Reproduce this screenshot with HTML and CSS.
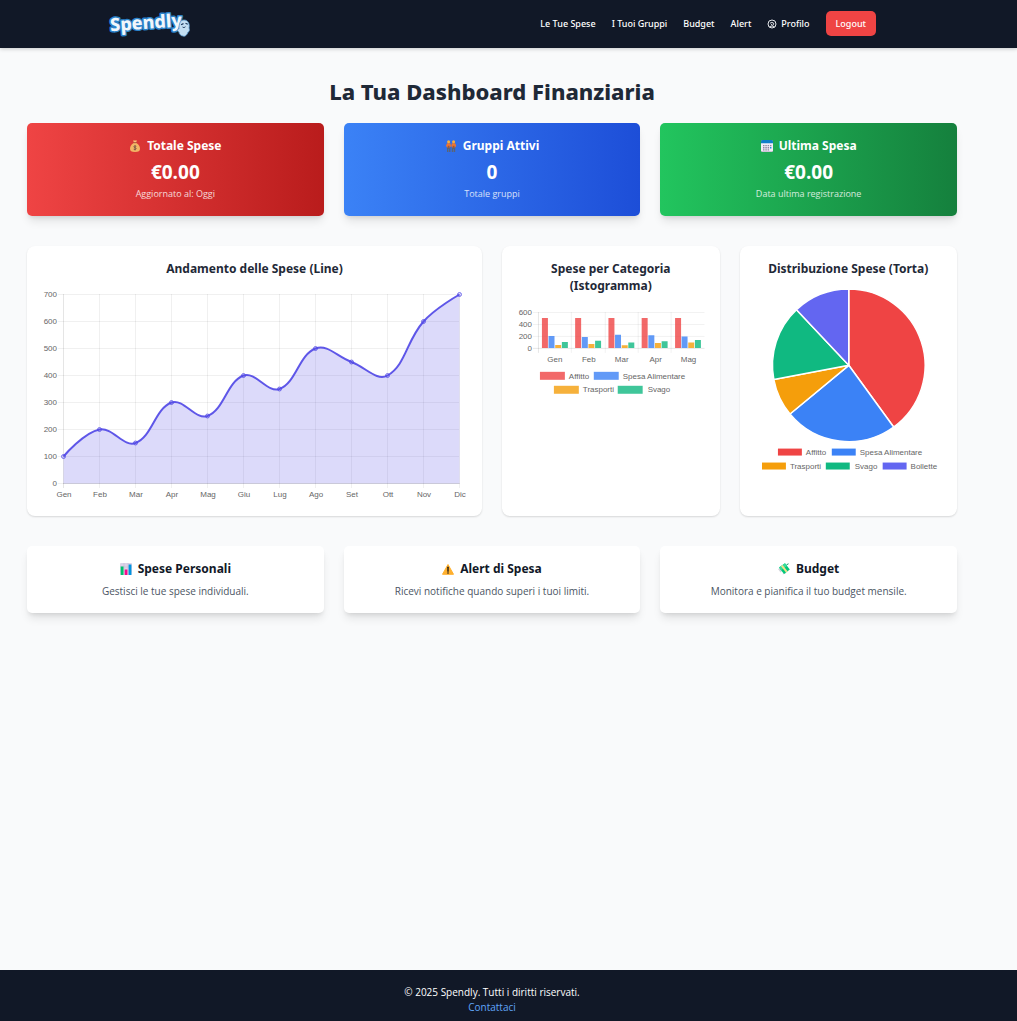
FILE: index.html
```html
<!DOCTYPE html>
<html lang="it">
<head>
<meta charset="utf-8">
<meta name="viewport" content="width=device-width, initial-scale=1">
<title>Spendly - Dashboard</title>
<link rel="stylesheet" href="styles.css">
</head>
<body>
<header class="site-header">
  <div class="header-inner">
    <a class="logo" href="#">
      <svg width="84" height="40" viewBox="0 0 84 40" role="img" aria-label="Spendly">
        <g transform="rotate(-4 36 18)">
          <text class="logo-text" x="2" y="25">Spendly</text>
        </g>
        <path d="M71 28c-2-1-2-3 0-3 0-5 1-9 5-9s6 4 5 8c1 2 0 4-1 4-1 3-3 5-5 4-2 0-4-2-4-4z" fill="#c3def2" stroke="#5d9fd6" stroke-width=".8"/>
        <path d="M73.500 20.500l1.500-.7M78 19.500l1.300.5" stroke="#1e3a5f" stroke-width="1.300" stroke-linecap="round"/>
        <path d="M74.500 23q1.500 1.500 3-.3" fill="none" stroke="#1e3a5f" stroke-width=".9"/>
      </svg>
    </a>
    <nav class="nav">
      <a href="#">Le Tue Spese</a>
      <a href="#">I Tuoi Gruppi</a>
      <a href="#">Budget</a>
      <a href="#">Alert</a>
      <a class="profile" href="#">
        <svg width="10" height="10" viewBox="0 0 10 10" fill="none" stroke="#e5e7eb" stroke-width="1" aria-hidden="true">
          <circle cx="5" cy="5" r="4"/>
          <path d="M3 4.200Q5 2.700 6.700 4.200Q7 6 5.300 6.300Q4 6 4.600 5M2.500 7.700Q5 6.200 7.500 7.700"/>
        </svg>
        Profilo
      </a>
      <button class="logout" type="button">Logout</button>
    </nav>
  </div>
</header>

<main class="main">
  <h1 class="page-title">La Tua Dashboard Finanziaria</h1>

  <section class="grid-three">
    <article class="stat stat-red">
      <h2 class="card-title">
        <svg class="icon" viewBox="0 0 12 12" aria-hidden="true">
          <path d="M4 .5h4L7 2.500H5z" fill="#f9c078"/>
          <path d="M4.500 3h3C9.500 4.500 11 6.500 11 8.700 11 11 9.500 12 6 12S1 11 1 8.700C1 6.500 2.500 4.500 4.500 3z" fill="#f3b566"/>
          <path d="M4.300 2.700h3.400" stroke="#a9583e" stroke-width=".9"/>
          <path d="M7.300 6.300Q5 5.300 4.900 6.700 5 7.500 6 7.700 7.300 8 7.200 8.900 6.500 10 4.700 9.200M6 5.200v5.200" fill="none" stroke="#7b5544" stroke-width=".9"/>
        </svg>
        Totale Spese
      </h2>
      <p class="stat-value">€0.00</p>
      <p class="stat-note">Aggiornato al: Oggi</p>
    </article>
    <article class="stat stat-blue">
      <h2 class="card-title">
        <svg class="icon" viewBox="0 0 12 12" aria-hidden="true">
          <path d="M2 7h3.400v5H4V9h-.6v3H2zM6.800 7h3.400v5H8.800V9h-.6v3H6.800z" fill="#5b6473"/>
          <path d="M2 3.200h3.300L6 6 4.900 7.500H2.300L1 6zM6.900 3.200h3.300l1 2.800-1.300 1.500H7.300L6.200 6z" fill="#f4742b"/>
          <circle cx="3.600" cy="1.800" r="1.500" fill="#fbb03b"/><circle cx="8.600" cy="1.800" r="1.500" fill="#fbb03b"/>
          <path d="M2.700 5.800h1.800V8H2.700zM7.700 5.800h1.800V8H7.700z" fill="#8c5a4c"/>
        </svg>
        Gruppi Attivi
      </h2>
      <p class="stat-value">0</p>
      <p class="stat-note">Totale gruppi</p>
    </article>
    <article class="stat stat-green">
      <h2 class="card-title">
        <svg class="icon" viewBox="0 0 12 12" aria-hidden="true">
          <rect width="12" height="12" rx="1.500" fill="#a99bb8"/>
          <path d="M0 3h12v7.500a1 1 0 0 1-1 1H1a1 1 0 0 1-1-1z" fill="#f1edf7"/>
          <path d="M0 3.300V1.500Q0 0 1.500 0h9Q12 0 12 1.500v1.800z" fill="#0f7fc9"/>
          <path d="M2 5h1.500v1.300H2zM4.300 5h1.500v1.300H4.300zM6.600 5h1.500v1.300H6.600zM9 5h1.400v1.300H9zM2 7.100h1.500v1.300H2zM4.300 7.100h1.500v1.300H4.300zM6.600 7.100h1.500v1.300H6.600zM2 9.200h1.500v1.300H2zM4.300 9.200h1.500v1.300H4.300zM6.600 9.200h1.500v1.300H6.600z" fill="#8f88a3"/>
          <path d="M9 7.100h1.400v1.300H9z" fill="#1d8fe0"/>
        </svg>
        Ultima Spesa
      </h2>
      <p class="stat-value">€0.00</p>
      <p class="stat-note">Data ultima registrazione</p>
    </article>
  </section>

  <section class="grid-charts">
    <article class="chart-card chart-wide">
      <h2 class="chart-title">Andamento delle Spese (Line)</h2>
      <svg class="chart" viewBox="0 0 429 214" role="img" aria-label="Andamento delle Spese">
        <path class="gridline" d="M18 5.500H419M18 32.500H419M18 59.500H419M18 86.500H419M18 113.500H419M18 140.500H419M18 167.500H419M18 194.500H419"/>
        <path class="gridline" d="M59.500 5V199M95.500 5V199M131.500 5V199M167.500 5V199M203.500 5V199M239.500 5V199M275.500 5V199M311.500 5V199M347.500 5V199M383.500 5V199M419.500 5V199"/>
        <path class="axis" d="M23.500 5V199M23 194.500H420"/>
        <path fill="#4f46e5" fill-opacity=".2" d="M23.500 167.500C23.500 167.500 44 143.400 59.500 140.500C72.800 138 83.500 158.500 95.500 154C112.300 147.700 114.700 119.800 131.500 113.500C143.500 109 155.500 131.500 167.500 127C184.300 120.700 186.700 92.800 203.500 86.500C215.500 82 227.500 104.500 239.500 100C256.300 93.700 258.700 65.800 275.500 59.500C287.500 55 297.100 67.600 311.500 73C325.900 78.400 336.800 92.500 347.500 86.500C365.600 76.300 366.500 51.600 383.500 32.500C395.300 19.200 419.500 5.500 419.500 5.500V194.500H23.500Z"/>
        <path fill="none" stroke="#4f46e5" stroke-width="2" stroke-opacity=".9" d="M23.500 167.500C23.500 167.500 44 143.400 59.500 140.500C72.800 138 83.500 158.500 95.500 154C112.300 147.700 114.700 119.800 131.500 113.500C143.500 109 155.500 131.500 167.500 127C184.300 120.700 186.700 92.800 203.500 86.500C215.500 82 227.500 104.500 239.500 100C256.300 93.700 258.700 65.800 275.500 59.500C287.500 55 297.100 67.600 311.500 73C325.900 78.400 336.800 92.500 347.500 86.500C365.600 76.300 366.500 51.600 383.500 32.500C395.300 19.200 419.500 5.500 419.500 5.500"/>
        <g class="points">
          <circle cx="23.500" cy="167.500" r="2"/><circle cx="59.500" cy="140.500" r="2"/><circle cx="95.500" cy="154" r="2"/><circle cx="131.500" cy="113.500" r="2"/><circle cx="167.500" cy="127" r="2"/><circle cx="203.500" cy="86.500" r="2"/><circle cx="239.500" cy="100" r="2"/><circle cx="275.500" cy="59.500" r="2"/><circle cx="311.500" cy="73" r="2"/><circle cx="347.500" cy="86.500" r="2"/><circle cx="383.500" cy="32.500" r="2"/><circle cx="419.500" cy="5.500" r="2"/>
        </g>
        <g class="label end">
          <text x="17" y="8">700</text><text x="17" y="35">600</text><text x="17" y="62">500</text><text x="17" y="89">400</text><text x="17" y="116">300</text><text x="17" y="143">200</text><text x="17" y="170">100</text><text x="17" y="197">0</text>
        </g>
        <g class="label middle">
          <text x="24" y="208">Gen</text><text x="60" y="208">Feb</text><text x="96" y="208">Mar</text><text x="132" y="208">Apr</text><text x="168" y="208">Mag</text><text x="204" y="208">Giu</text><text x="240" y="208">Lug</text><text x="276" y="208">Ago</text><text x="312" y="208">Set</text><text x="348" y="208">Ott</text><text x="384" y="208">Nov</text><text x="420" y="208">Dic</text>
        </g>
      </svg>
    </article>

    <article class="chart-card">
      <h2 class="chart-title">Spese per Categoria (Istogramma)</h2>
      <svg class="chart" viewBox="0 0 192 96" role="img" aria-label="Spese per Categoria">
        <path class="gridline" d="M18 6.500H190M18 18.500H190M18 30.500H190M56.500 6V47M90.500 6V47M123.500 6V47M156.500 6V47"/>
        <path class="axis" d="M23.500 6V47M18 42.500H190"/>
        <g opacity=".8">
          <path fill="#ef4444" d="M27 12h6v30h-6zM60.300 12h6v30h-6zM93.700 12h6v30h-6zM127 12h6v30h-6zM160.500 12h6v30h-6z"/>
          <path fill="#3b82f6" d="M33.600 30h6v12h-6zM67 31.200h6v10.800h-6zM100.300 28.800h6v13.200h-6zM133.700 29.400h6v12.600h-6zM167 30.600h6v11.400h-6z"/>
          <path fill="#f59e0b" d="M40.300 39h6v3h-6zM73.600 38h6v4h-6zM107 39.300h6v2.700h-6zM140.300 37.200h6v4.800h-6zM173.700 36.600h6v5.400h-6z"/>
          <path fill="#10b981" d="M47 36h6v6h-6zM80.300 34.800h6v7.200h-6zM113.600 36.600h6v5.400h-6zM147 35.400h6v6.600h-6zM180.400 34.200h6v7.800h-6z"/>
          <path fill="#ef4444" d="M25 66h25v8H25z"/><path fill="#3b82f6" d="M79 66h25v8H79z"/>
          <path fill="#f59e0b" d="M39 80h25v8H39z"/><path fill="#10b981" d="M103 80h25v8h-25z"/>
        </g>
        <g class="label end">
          <text x="17" y="9">600</text><text x="17" y="21">400</text><text x="17" y="33">200</text><text x="17" y="45">0</text>
        </g>
        <g class="label middle">
          <text x="40" y="56">Gen</text><text x="74" y="56">Feb</text><text x="107" y="56">Mar</text><text x="141" y="56">Apr</text><text x="174" y="56">Mag</text>
        </g>
        <g class="label">
          <text x="54" y="73">Affitto</text><text x="108" y="73">Spesa Alimentare</text><text x="68" y="86">Trasporti</text><text x="133" y="86">Svago</text>
        </g>
      </svg>
    </article>

    <article class="chart-card">
      <h2 class="chart-title">Distribuzione Spese (Torta)</h2>
      <svg class="chart" viewBox="0 0 192 192" role="img" aria-label="Distribuzione Spese">
        <g stroke="#fff" stroke-width="1.500" stroke-linejoin="round">
          <path fill="#ef4444" d="M96 76.500V0A76.500 76.500 0 0 1 141 138.400Z"/>
          <path fill="#3b82f6" d="M96 76.500L141 138.400A76.500 76.500 0 0 1 37.100 125.300Z"/>
          <path fill="#f59e0b" d="M96 76.500L37.100 125.300A76.500 76.500 0 0 1 20.900 90.800Z"/>
          <path fill="#10b981" d="M96 76.500L20.900 90.800A76.500 76.500 0 0 1 43.600 20.700Z"/>
          <path fill="#6366f1" d="M96 76.500L43.600 20.700A76.500 76.500 0 0 1 96 0Z"/>
        </g>
        <path fill="#ef4444" d="M25 160h24v7H25z"/><path fill="#3b82f6" d="M79 160h24v7H79z"/>
        <path fill="#f59e0b" d="M9 174h24v7H9z"/><path fill="#10b981" d="M73 174h24v7H73z"/><path fill="#6366f1" d="M130 174h24v7h-24z"/>
        <g class="label">
          <text x="53" y="166">Affitto</text><text x="107" y="166">Spesa Alimentare</text><text x="37" y="180">Trasporti</text><text x="102" y="180">Svago</text><text x="158" y="180">Bollette</text>
        </g>
      </svg>
    </article>
  </section>

  <section class="grid-three">
    <article class="service">
      <h2 class="card-title">
        <svg class="icon" viewBox="0 0 12 12" aria-hidden="true">
          <rect width="12" height="12" rx="1" fill="#ddd3e8"/>
          <path d="M0 4h12M0 8h12M4 0v12M8 0v12" stroke="#c3b5d3" stroke-width=".5"/>
          <path d="M.7 3.500h2.800V12H.7z" fill="#00c16e"/><path d="M4.700 6.500h2.700V12H4.700z" fill="#f70a8d"/><path d="M8.600 1.500h2.800V12H8.600z" fill="#0095e0"/>
        </svg>
        Spese Personali
      </h2>
      <p class="service-text">Gestisci le tue spese individuali.</p>
    </article>
    <article class="service">
      <h2 class="card-title">
        <svg class="icon" viewBox="0 0 12 12" aria-hidden="true">
          <path d="M6 1.500L11.500 11.300H.5z" fill="#ffb02e" stroke="#ffb02e" stroke-width="1" stroke-linejoin="round"/>
          <path d="M6 4.200v4" stroke="#1f1a17" stroke-width="1.400" stroke-linecap="round"/><circle cx="6" cy="10" r=".8" fill="#1f1a17"/>
        </svg>
        Alert di Spesa
      </h2>
      <p class="service-text">Ricevi notifiche quando superi i tuoi limiti.</p>
    </article>
    <article class="service">
      <h2 class="card-title">
        <svg class="icon" viewBox="0 0 12 12" aria-hidden="true">
          <path d="M0 6l2.500-1L4 8 2.500 9.500zM4.500 11.500L6 9l2 1.500z" fill="#d3d6dc"/>
          <path d="M1 4.500L7 .3 11.800 6.500 6 11z" fill="#00c77b"/>
          <path d="M7 .3L9 2.900 3 7.300 1 4.500z" fill="#34dc9c"/>
          <path d="M3 3.200L4.600 2l4.900 6.200L8 9.400z" fill="#f3e08a"/>
          <path d="M8.500 1.800l2-1" stroke="#0a9c61"/>
        </svg>
        Budget
      </h2>
      <p class="service-text">Monitora e pianifica il tuo budget mensile.</p>
    </article>
  </section>
</main>

<footer class="site-footer">
  <p>© 2025 Spendly. Tutti i diritti riservati.</p>
  <a href="#">Contattaci</a>
</footer>
</body>
</html>
```
FILE: styles.css
```css
* {
  box-sizing: border-box;
  margin: 0;
  padding: 0;
}

body {
  min-height: 100vh;
  display: flex;
  flex-direction: column;
  background: #f9fafb;
  color: #111827;
  font-family: "Open Sans", "Noto Sans", sans-serif;
  font-size: 10px;
  line-height: 15px;
}

a {
  color: inherit;
  text-decoration: none;
}

.site-header,
.main,
.site-footer {
  padding-right: 33px;
}

.site-header {
  background: #111827;
  color: #fff;
  box-shadow: 0 1px 4px rgba(0, 0, 0, 0.2);
}

.header-inner {
  max-width: 768px;
  min-height: 47px;
  margin: 0 auto 1px;
  display: flex;
  align-items: center;
  justify-content: space-between;
}

.logo svg,
.profile svg {
  display: block;
}

.logo-text {
  fill: #f1f6fb;
  stroke: #2b82c9;
  stroke-width: 3px;
  stroke-linejoin: round;
  paint-order: stroke;
  font-family: "Noto Sans", sans-serif;
  font-size: 18px;
  font-weight: 800;
}

.nav {
  display: flex;
  align-items: center;
  gap: 16px;
  font-family: "Noto Sans", sans-serif;
  font-size: 9px;
  font-weight: 500;
}

.profile {
  display: flex;
  align-items: center;
  gap: 4px;
}

.logout {
  padding: 5px 10px;
  border: 0;
  border-radius: 5px;
  background: #ef4444;
  color: #fff;
  font: inherit;
  line-height: 15px;
}

.main {
  flex: 1;
  padding-top: 27px;
  padding-left: 27px;
  padding-right: 60px;
}

.page-title {
  margin-bottom: 16px;
  color: #1f2937;
  font-family: "Noto Sans", sans-serif;
  font-size: 22px;
  font-weight: 800;
  line-height: 32px;
  text-align: center;
}

.grid-three,
.grid-charts {
  display: grid;
  gap: 20px;
  margin-bottom: 30px;
}

.grid-three {
  grid-template-columns: repeat(3, minmax(0, 1fr));
}

.grid-charts {
  grid-template-columns: repeat(4, minmax(0, 1fr));
}

.stat,
.service {
  padding: 13px;
  border-radius: 5px;
  text-align: center;
  box-shadow: 0 7px 10px -2px rgba(0, 0, 0, 0.1), 0 3px 4px -2px rgba(0, 0, 0, 0.1);
}

.stat {
  color: #fff;
}

.stat-red {
  background: linear-gradient(to right, #ef4444, #b91c1c);
}

.stat-blue {
  background: linear-gradient(to right, #3b82f6, #1d4ed8);
}

.stat-green {
  background: linear-gradient(to right, #22c55e, #15803d);
}

.service {
  background: #fff;
}

.card-title,
.chart-title {
  font-family: "Noto Sans", sans-serif;
  font-size: 12px;
  font-weight: 700;
}

.card-title {
  display: flex;
  align-items: center;
  justify-content: center;
  gap: 6px;
  margin-bottom: 3px;
  line-height: 20px;
}

.icon {
  width: 12px;
  height: 12px;
}

.stat-value {
  font-size: 19px;
  font-weight: 700;
  line-height: 27px;
}

.stat-note {
  padding-bottom: 1px;
  font-size: 9px;
  line-height: 16px;
  opacity: 0.8;
}

.service-text {
  color: #4b5563;
  line-height: 18px;
}

.chart-card {
  padding: 13px;
  border-radius: 8px;
  background: #fff;
  box-shadow: 0 1px 2px rgba(0, 0, 0, 0.14);
}

.chart-wide {
  grid-column: span 2;
}

.chart-title {
  padding-top: 1px;
  margin-bottom: 12px;
  color: #1f2937;
  line-height: 17px;
  text-align: center;
}

.chart {
  display: block;
  width: 100%;
  height: auto;
}

.gridline,
.axis {
  fill: none;
  stroke: rgba(0, 0, 0, 0.06);
}

.axis {
  stroke: rgba(0, 0, 0, 0.1);
}

.points {
  fill: rgba(79, 70, 229, 0.2);
  stroke: #4f46e5;
  stroke-opacity: 0.7;
}

.label {
  fill: #666;
  font-family: "Liberation Sans", Arial, sans-serif;
  font-size: 8px;
}

.end {
  text-anchor: end;
}

.middle {
  text-anchor: middle;
}

.site-footer {
  padding-top: 15px;
  padding-bottom: 6px;
  background: #111827;
  color: #fff;
  text-align: center;
}

.site-footer a {
  color: #60a5fa;
}
```
